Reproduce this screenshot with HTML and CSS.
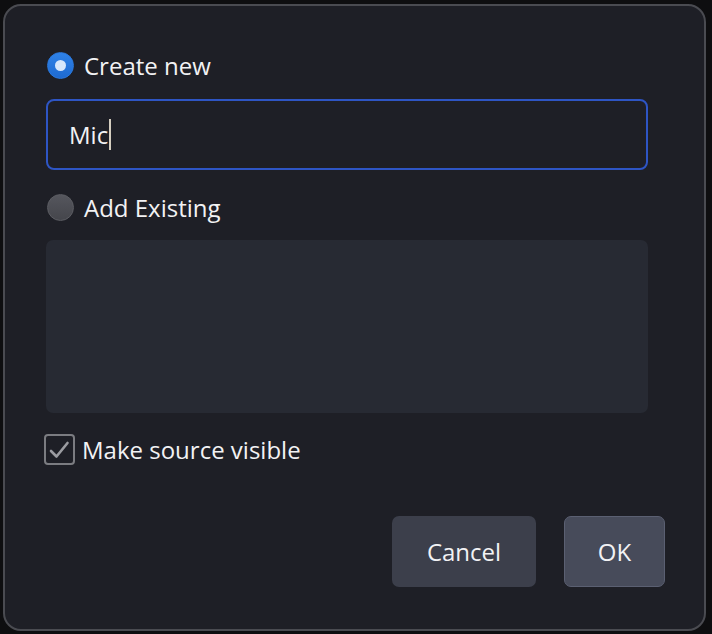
FILE: index.html
```html
<!DOCTYPE html>
<html lang="en">

<head>
    <meta charset="UTF-8">
    <meta name="viewport" content="width=device-width, initial-scale=1.0">
    <title>Add Source</title>
    <link rel="stylesheet" href="styles.css">
</head>

<body>
    <div class="dialogo">
        <div class="opcao opcao-nova">
            <span class="radio marcado"></span>
            <span>Create new</span>
        </div>
        <div class="campo">
            <span class="campo-texto">Mic</span><span class="cursor"></span>
        </div>

        <div class="opcao opcao-existente">
            <span class="radio"></span>
            <span>Add Existing</span>
        </div>
        <div class="lista"></div>

        <div class="visivel">
            <span class="caixa">
                <svg width="27" height="27" viewBox="0 0 27 27">
                    <polyline points="5,15 10.5,20.5 21.5,7" fill="none" stroke="#9b9ca1" stroke-width="2.6" stroke-linecap="round" stroke-linejoin="round" />
                </svg>
            </span>
            <span>Make source visible</span>
        </div>

        <div class="botoes">
            <button class="botao cancelar">Cancel</button>
            <button class="botao ok">OK</button>
        </div>
    </div>
</body>

</html>
```

FILE: styles.css
```css
body {
    margin: 0;
    background-color: #0e0e10;
    font-family: "Open Sans", "Noto Sans", sans-serif;
    color: #f2f2f4;
}

.dialogo {
    box-sizing: border-box;
    width: 703px;
    height: 627px;
    margin: 4px 0 0 3px;
    padding: 46px 0 0 41px;
    background-color: #1e1f26;
    border: 2px solid #4a4b51;
    border-radius: 18px;
    display: flex;
    flex-direction: column;
}

.opcao {
    display: flex;
    align-items: center;
    gap: 10px;
    height: 27px;
    font-size: 24px;
    padding-left: 1px;
}

.radio {
    width: 27px;
    height: 27px;
    border-radius: 50%;
    box-sizing: border-box;
    background: linear-gradient(#55565d, #45464c);
    border: 1px solid #5c5d63;
    display: flex;
    justify-content: center;
    align-items: center;
}

.radio.marcado {
    background: linear-gradient(#2f82e8, #1e6ad0);
    border-color: #2a78dd;
}

.radio.marcado::after {
    content: '';
    width: 11px;
    height: 11px;
    border-radius: 50%;
    background-color: #d7e7fb;
}

.campo {
    box-sizing: border-box;
    width: 602px;
    height: 71px;
    margin-top: 20px;
    padding-left: 21px;
    border: 2px solid #2e55c4;
    border-radius: 8px;
    display: flex;
    align-items: center;
    font-size: 24px;
}

.cursor {
    width: 2px;
    height: 31px;
    margin-left: 1px;
    background-color: #d4cdbf;
}

.opcao-existente {
    margin-top: 24px;
}

.lista {
    width: 602px;
    height: 173px;
    margin-top: 19px;
    background-color: #272a33;
    border-radius: 7px;
}

.visivel {
    display: flex;
    align-items: center;
    gap: 7px;
    height: 31px;
    margin-top: 21px;
    margin-left: -2px;
    font-size: 24px;
}

.caixa {
    box-sizing: border-box;
    width: 31px;
    height: 31px;
    border: 2px solid #7b7c81;
    border-radius: 4px;
    display: flex;
    justify-content: center;
    align-items: center;
}

.botoes {
    display: flex;
    justify-content: flex-end;
    gap: 28px;
    margin-top: 51px;
    padding-right: 39px;
}

.botao {
    height: 71px;
    border-radius: 7px;
    font-family: inherit;
    font-size: 24px;
    color: #f2f2f4;
    cursor: pointer;
}

.cancelar {
    width: 144px;
    border: none;
    background-color: #3c3f4b;
}

.ok {
    width: 101px;
    border: 1px solid #5b6072;
    background-color: #474b5a;
}
```
